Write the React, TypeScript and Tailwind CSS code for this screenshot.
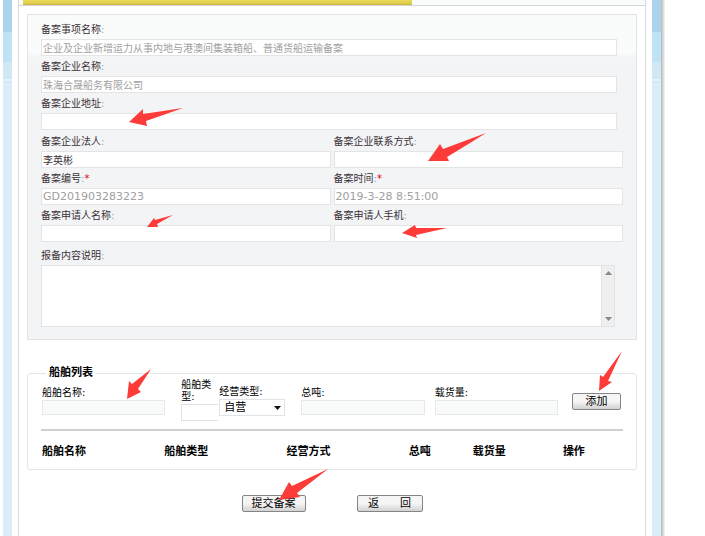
import React from 'react'

const bandClass =
  'w-[9px] shrink-0 bg-[linear-gradient(to_bottom,#abd4ec_0px,#abd4ec_32px,#bfe2f4_32px,#bfe2f4_62px,#cfe8f3_62px,#cfe8f3_79px,#e2f1fa_79px,#e2f1fa_81px,#d3e9f5_81px,#d3e9f5_83px,#daedf8_83px)]'

const arrows = [
  '129,122 143,109 143,114 183,108 146,121 147,126',
  '428,161 440,144 443,149 486,133 470,143 447,157 449,161',
  '147,227 154,218 155,220 173,215 157,224 158,227',
  '402,233 415,225 416,228 447,228 416,235 417,238',
  '127,399 129,381 132,384 151,369 138,389 141,392',
  '599,391 600,375 603,377 622,351 608,381 612,382',
  '279,500 289,482 292,486 328,469 297,493 300,497',
]

const columns = [
  { name: '船舶名称', width: 'w-[21%]' },
  { name: '船舶类型', width: 'w-[21%]' },
  { name: '经营方式', width: 'w-[21%]' },
  { name: '总吨', width: 'w-[11%]' },
  { name: '载货量', width: 'w-[15.5%]' },
  { name: '操作', width: 'w-[10.5%]' },
]

function Field({ id, label, value = '', required = false, disabled = false, className = '' }) {
  return (
    <div className={`min-w-0 ${className}`}>
      <label htmlFor={id} className="block h-5 pt-px text-[10px] leading-5 text-[#3a3238]">
        {label}<span className="text-[#9aa]">:</span>
        {required && <span className="text-red-600">*</span>}
      </label>
      <input
        id={id}
        type="text"
        defaultValue={value}
        disabled={disabled}
        className={`block h-[17px] w-full border border-[#e2e4e6] bg-white px-px leading-[15px] text-[#3a3238] disabled:text-[#a0a0a0] ${/^[\x20-\x7e]+$/.test(value) ? 'text-[11px]' : 'text-[10px]'}`}
      />
    </div>
  )
}

function ShipInput({ id, label }) {
  return (
    <div className="min-w-0 flex-1 pt-[9px]">
      <label htmlFor={id} className="block h-[15px] text-[10px] leading-[15px]">{label}:</label>
      <input id={id} type="text" className="block h-[15px] w-full border border-[#e6e8ea] bg-[#f9fbfa] px-0.5 text-[10px]" />
    </div>
  )
}

function Button({ children, className = '' }) {
  return (
    <button
      type="button"
      className={`h-[17px] shrink-0 rounded-[2px] border border-[#858585] bg-linear-to-b from-[#f5f5f5] from-50% to-[#d2d2d2] text-[11px] leading-[14px] whitespace-pre text-black ${className}`}
    >
      {children}
    </button>
  )
}

export default function App() {
  return (
    <div className="relative flex min-h-screen overflow-hidden bg-white pr-10 pl-[3px] font-['DejaVu_Sans','Noto_Sans_CJK_SC',sans-serif]">
      <div className={bandClass} />
      <div className="mx-[6px] min-w-0 flex-1 border-x border-[#d9dadd]">
        <div className="flex h-[6px] border-b border-[#d5d6d8] bg-[#fafbfb] pl-1">
          <div className="h-[5px] w-[62.5%] bg-[linear-gradient(to_bottom,#e9d957_0px,#e4d250_3px,#c9b33d_5px)]" />
        </div>

        <form className="px-2 pt-2" onSubmit={(e) => e.preventDefault()}>
          <section className="border border-[#e0e2e5] bg-[linear-gradient(to_bottom,#fafcfb_0px,#fafcfb_37px,#f3f4f6_43px)] pt-1 pr-[13px] pb-3 pl-[13px]">
            <Field
              id="item"
              label="备案事项名称"
              value="企业及企业新增运力从事内地与港澳间集装箱船、普通货船运输备案"
              disabled
              className="mr-[6px]"
            />
            <Field id="company" label="备案企业名称" value="珠海合晟船务有限公司" disabled className="mr-[6px]" />
            <Field id="address" label="备案企业地址" className="mr-[6px]" />
            <div className="mt-px grid grid-cols-2 gap-x-[3px]">
              <Field id="legal" label="备案企业法人" value="李英彬" />
              <Field id="contact" label="备案企业联系方式" />
              <Field id="number" label="备案编号" value="GD201903283223" required disabled />
              <Field id="time" label="备案时间" value="2019-3-28 8:51:00" required disabled />
              <Field id="applicant" label="备案申请人名称" />
              <Field id="mobile" label="备案申请人手机" />
            </div>
            <label htmlFor="content" className="mt-[3px] block h-5 pt-px text-[10px] leading-5 text-[#3a3238]">
              报备内容说明<span className="text-[#9aa]">:</span>
            </label>
            <div className="mr-2 flex h-[62px] border border-[#e0e2e4] bg-white">
              <textarea id="content" className="min-w-0 flex-1 resize-none p-0.5 text-[10px] outline-none" />
              <div className="flex w-[13px] flex-col items-center justify-between border-l border-[#e2e2e2] bg-[#efefef] py-[5px]">
                <svg width="7" height="4" viewBox="0 0 7 4"><path d="M0 4 3.5 0 7 4z" fill="#888" /></svg>
                <svg width="7" height="4" viewBox="0 0 7 4"><path d="M0 0 3.5 4 7 0z" fill="#888" /></svg>
              </div>
            </div>
          </section>

          <fieldset className="mt-[25px] rounded-[3px] border border-[#e0e5e8] pr-[13px] pb-[9px] pl-[13px] text-black">
            <legend className="ml-[5px] px-[3px] text-[11px] leading-4 font-bold">船舶列表</legend>
            <div className="-mt-[5px] flex h-[55px] items-start border-b-2 border-[#cfcfcf] pr-0.5 pl-px">
              <ShipInput id="shipName" label="船舶名称" />
              <div className="ml-4 w-[37px] shrink-0 pt-[3px]">
                <label htmlFor="shipType" className="block text-[10px] leading-[12px]">船舶类型:</label>
                <input id="shipType" type="text" className="mt-px block h-[17px] w-full border border-r-0 border-[#dfe1e3] bg-white px-0.5 text-[10px]" />
              </div>
              <div className="ml-px w-[66px] shrink-0 pt-2">
                <label htmlFor="operation" className="block h-[15px] text-[10px] leading-[15px]">经营类型:</label>
                <div className="relative">
                  <select id="operation" className="block h-[17px] w-full appearance-none border border-[#dfe3ea] bg-white pl-1 text-[11px] leading-[15px]">
                    <option>自营</option>
                  </select>
                  <svg className="pointer-events-none absolute top-[7px] right-1" width="7" height="4" viewBox="0 0 7 4">
                    <path d="M0 0h7L3.5 4z" fill="#111" />
                  </svg>
                </div>
              </div>
              <div className="w-4 shrink-0" />
              <ShipInput id="grossTon" label="总吨" />
              <div className="w-[10px] shrink-0" />
              <ShipInput id="capacity" label="载货量" />
              <Button className="mt-[17px] ml-[14px] w-[49px]">添加</Button>
            </div>
            <table className="mt-[13px] w-full table-fixed text-left text-[11px] leading-4">
              <thead>
                <tr>
                  {columns.map((col) => (
                    <th key={col.name} className={`${col.width} py-0 pl-px font-bold`}>{col.name}</th>
                  ))}
                </tr>
              </thead>
            </table>
          </fieldset>

          <div className="mt-[25px] flex justify-center gap-[51px]">
            <Button className="w-16">提交备案</Button>
            <Button className="w-[66px]">{'返      回'}</Button>
          </div>
        </form>
      </div>
      <div className={bandClass} />
      <div className="w-1 shrink-0 bg-linear-to-r from-[#b5b8bb] to-[#f6f6f6]" />

      {/* red markers pointing at what has to be filled in */}
      <svg className="pointer-events-none absolute top-0 left-0" width="705" height="536" viewBox="0 0 705 536" fill="#fd3b38">
        {arrows.map((points) => (
          <polygon key={points} points={points} />
        ))}
      </svg>
    </div>
  )
}
